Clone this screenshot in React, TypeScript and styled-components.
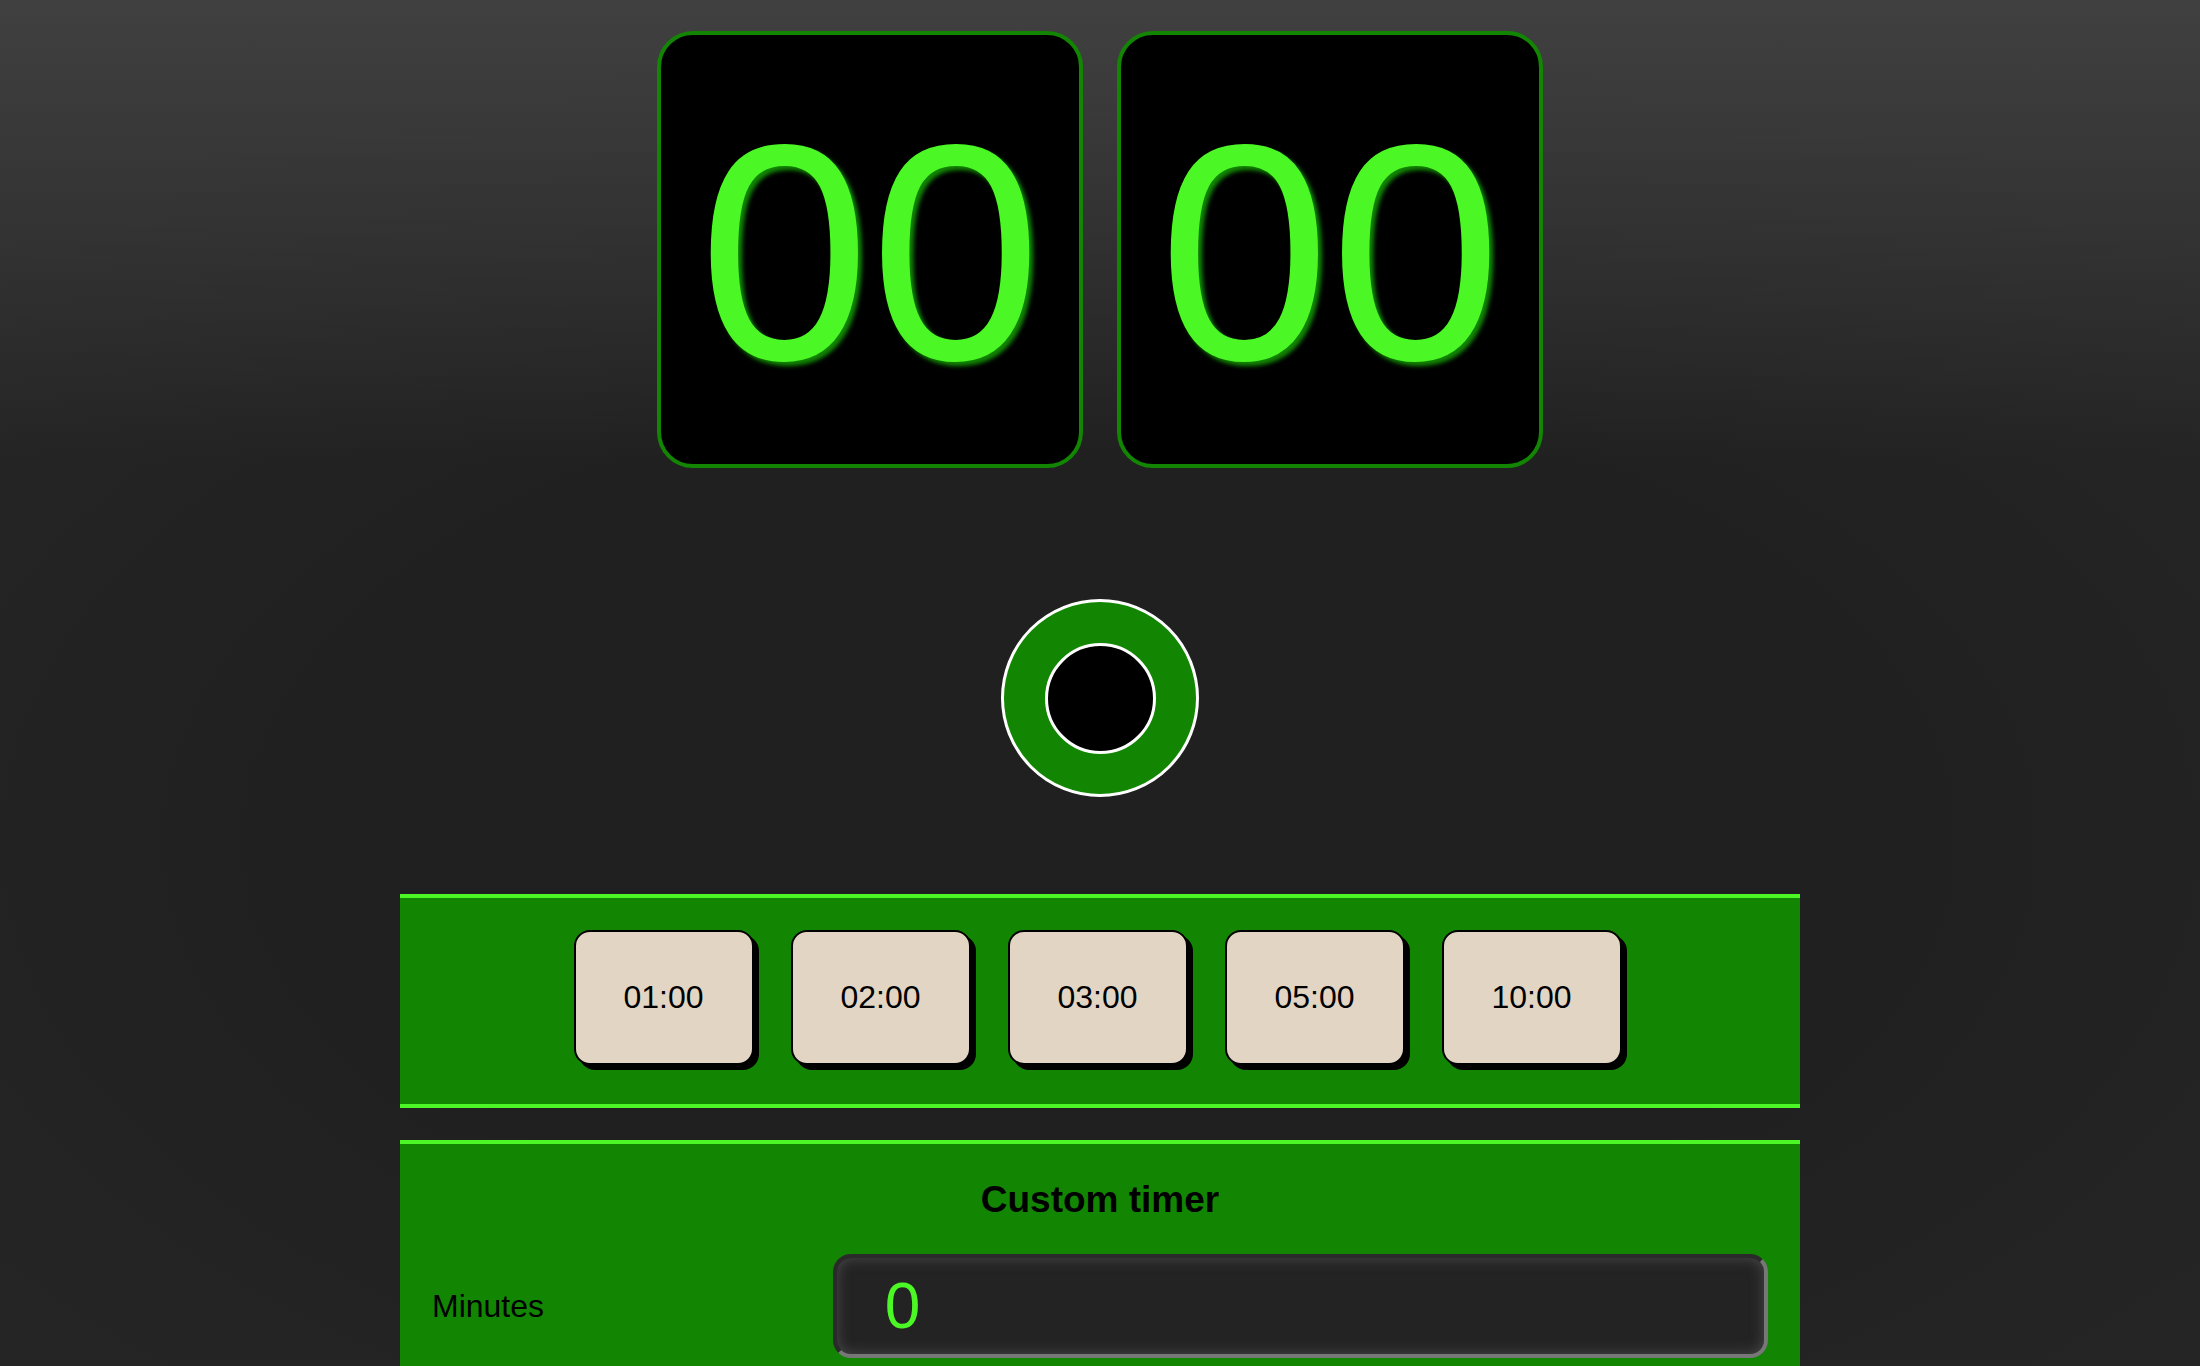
import React, { useState } from "react";
import styled, { createGlobalStyle } from "styled-components";

const GlobalStyle = createGlobalStyle`
  html, body {
    margin: 0;
    padding: 0;
    min-height: 100%;
  }
  body {
    font-family: "Liberation Sans", Arial, sans-serif;
    background-color: #222222;
    background-image:
      linear-gradient(to bottom, #404040 0px, rgba(34, 34, 34, 0) 460px),
      radial-gradient(ellipse 70% 60% at 50% 60%, #202020 50%, #262626 100%);
    background-repeat: no-repeat;
    min-height: 1366px;
    overflow: hidden;
  }
`;

const Page = styled.main`
  display: flex;
  flex-direction: column;
  align-items: center;
  padding-top: 31px;
`;

const Display = styled.div`
  display: flex;
  gap: 34px;
`;

const DigitCard = styled.div`
  box-sizing: border-box;
  width: 426px;
  height: 437px;
  display: flex;
  align-items: center;
  justify-content: center;
  padding-top: 5px;
  background: #000;
  border: 4px solid #128603;
  border-radius: 36px;
  color: #4bf724;
  font-size: 308px;
  line-height: 1;
  text-shadow: 4px 4px 4px #128603;
`;

const StartButton = styled.button`
  box-sizing: border-box;
  width: 198px;
  height: 198px;
  margin-top: 131px;
  padding: 0;
  display: flex;
  align-items: center;
  justify-content: center;
  background: #128603;
  border: 3px solid #fff;
  border-radius: 50%;
  cursor: pointer;
`;

const StartCore = styled.span`
  box-sizing: border-box;
  width: 111px;
  height: 111px;
  background: #000;
  border: 3px solid #fff;
  border-radius: 50%;
`;

const Panel = styled.section<{ $gap?: number }>`
  box-sizing: border-box;
  width: 1400px;
  margin-top: ${(p) => p.$gap ?? 32}px;
  background: #128603;
  border-top: 4px solid #4bf724;
  border-bottom: 4px solid #4bf724;
`;

const PresetRow = styled.div`
  display: flex;
  justify-content: center;
  gap: 37px;
  padding: 32px 5px 39px 0;
`;

const PresetButton = styled.button`
  box-sizing: border-box;
  width: 180px;
  height: 135px;
  background: #e2d5c3;
  border: 2px solid #000;
  border-radius: 16px;
  box-shadow: 5px 5px 0 #000;
  font-family: "Liberation Sans", Arial, sans-serif;
  font-size: 32px;
  color: #000;
  cursor: pointer;
`;

const CustomBody = styled.div`
  padding: 35px 32px 40px;
`;

const CustomTitle = styled.h2`
  margin: 0 0 33px;
  text-align: center;
  font-size: 37px;
  font-weight: bold;
  color: #000;
`;

const FieldRow = styled.label`
  display: grid;
  grid-template-columns: 30% 70%;
  align-items: center;
`;

const FieldLabel = styled.span`
  font-size: 32px;
  color: #000;
`;

const NumberInput = styled.input`
  box-sizing: border-box;
  width: 100%;
  height: 104px;
  padding: 0 45px 0 48px;
  background: #232323;
  border: 4px solid;
  border-color: #2a2a2a #777 #777 #2a2a2a;
  border-radius: 18px;
  box-shadow: inset 0 0 14px #4a4a4a;
  font-family: "Liberation Sans", Arial, sans-serif;
  font-size: 64px;
  color: #4bf724;
  outline: none;
`;

const presets = ["01:00", "02:00", "03:00", "05:00", "10:00"];

export default function App() {
  const [minutes, setMinutes] = useState("0");

  return (
    <>
      <GlobalStyle />
      <Page>
        <Display>
          <DigitCard>00</DigitCard>
          <DigitCard>00</DigitCard>
        </Display>

        <StartButton aria-label="Start">
          <StartCore />
        </StartButton>

        <Panel $gap={97}>
          <PresetRow>
            {presets.map((p) => (
              <PresetButton key={p}>{p}</PresetButton>
            ))}
          </PresetRow>
        </Panel>

        <Panel>
          <CustomBody>
            <CustomTitle>Custom timer</CustomTitle>
            <FieldRow>
              <FieldLabel>Minutes</FieldLabel>
              <NumberInput
                type="text"
                value={minutes}
                onChange={(e) => setMinutes(e.target.value)}
              />
            </FieldRow>
          </CustomBody>
        </Panel>
      </Page>
    </>
  );
}
